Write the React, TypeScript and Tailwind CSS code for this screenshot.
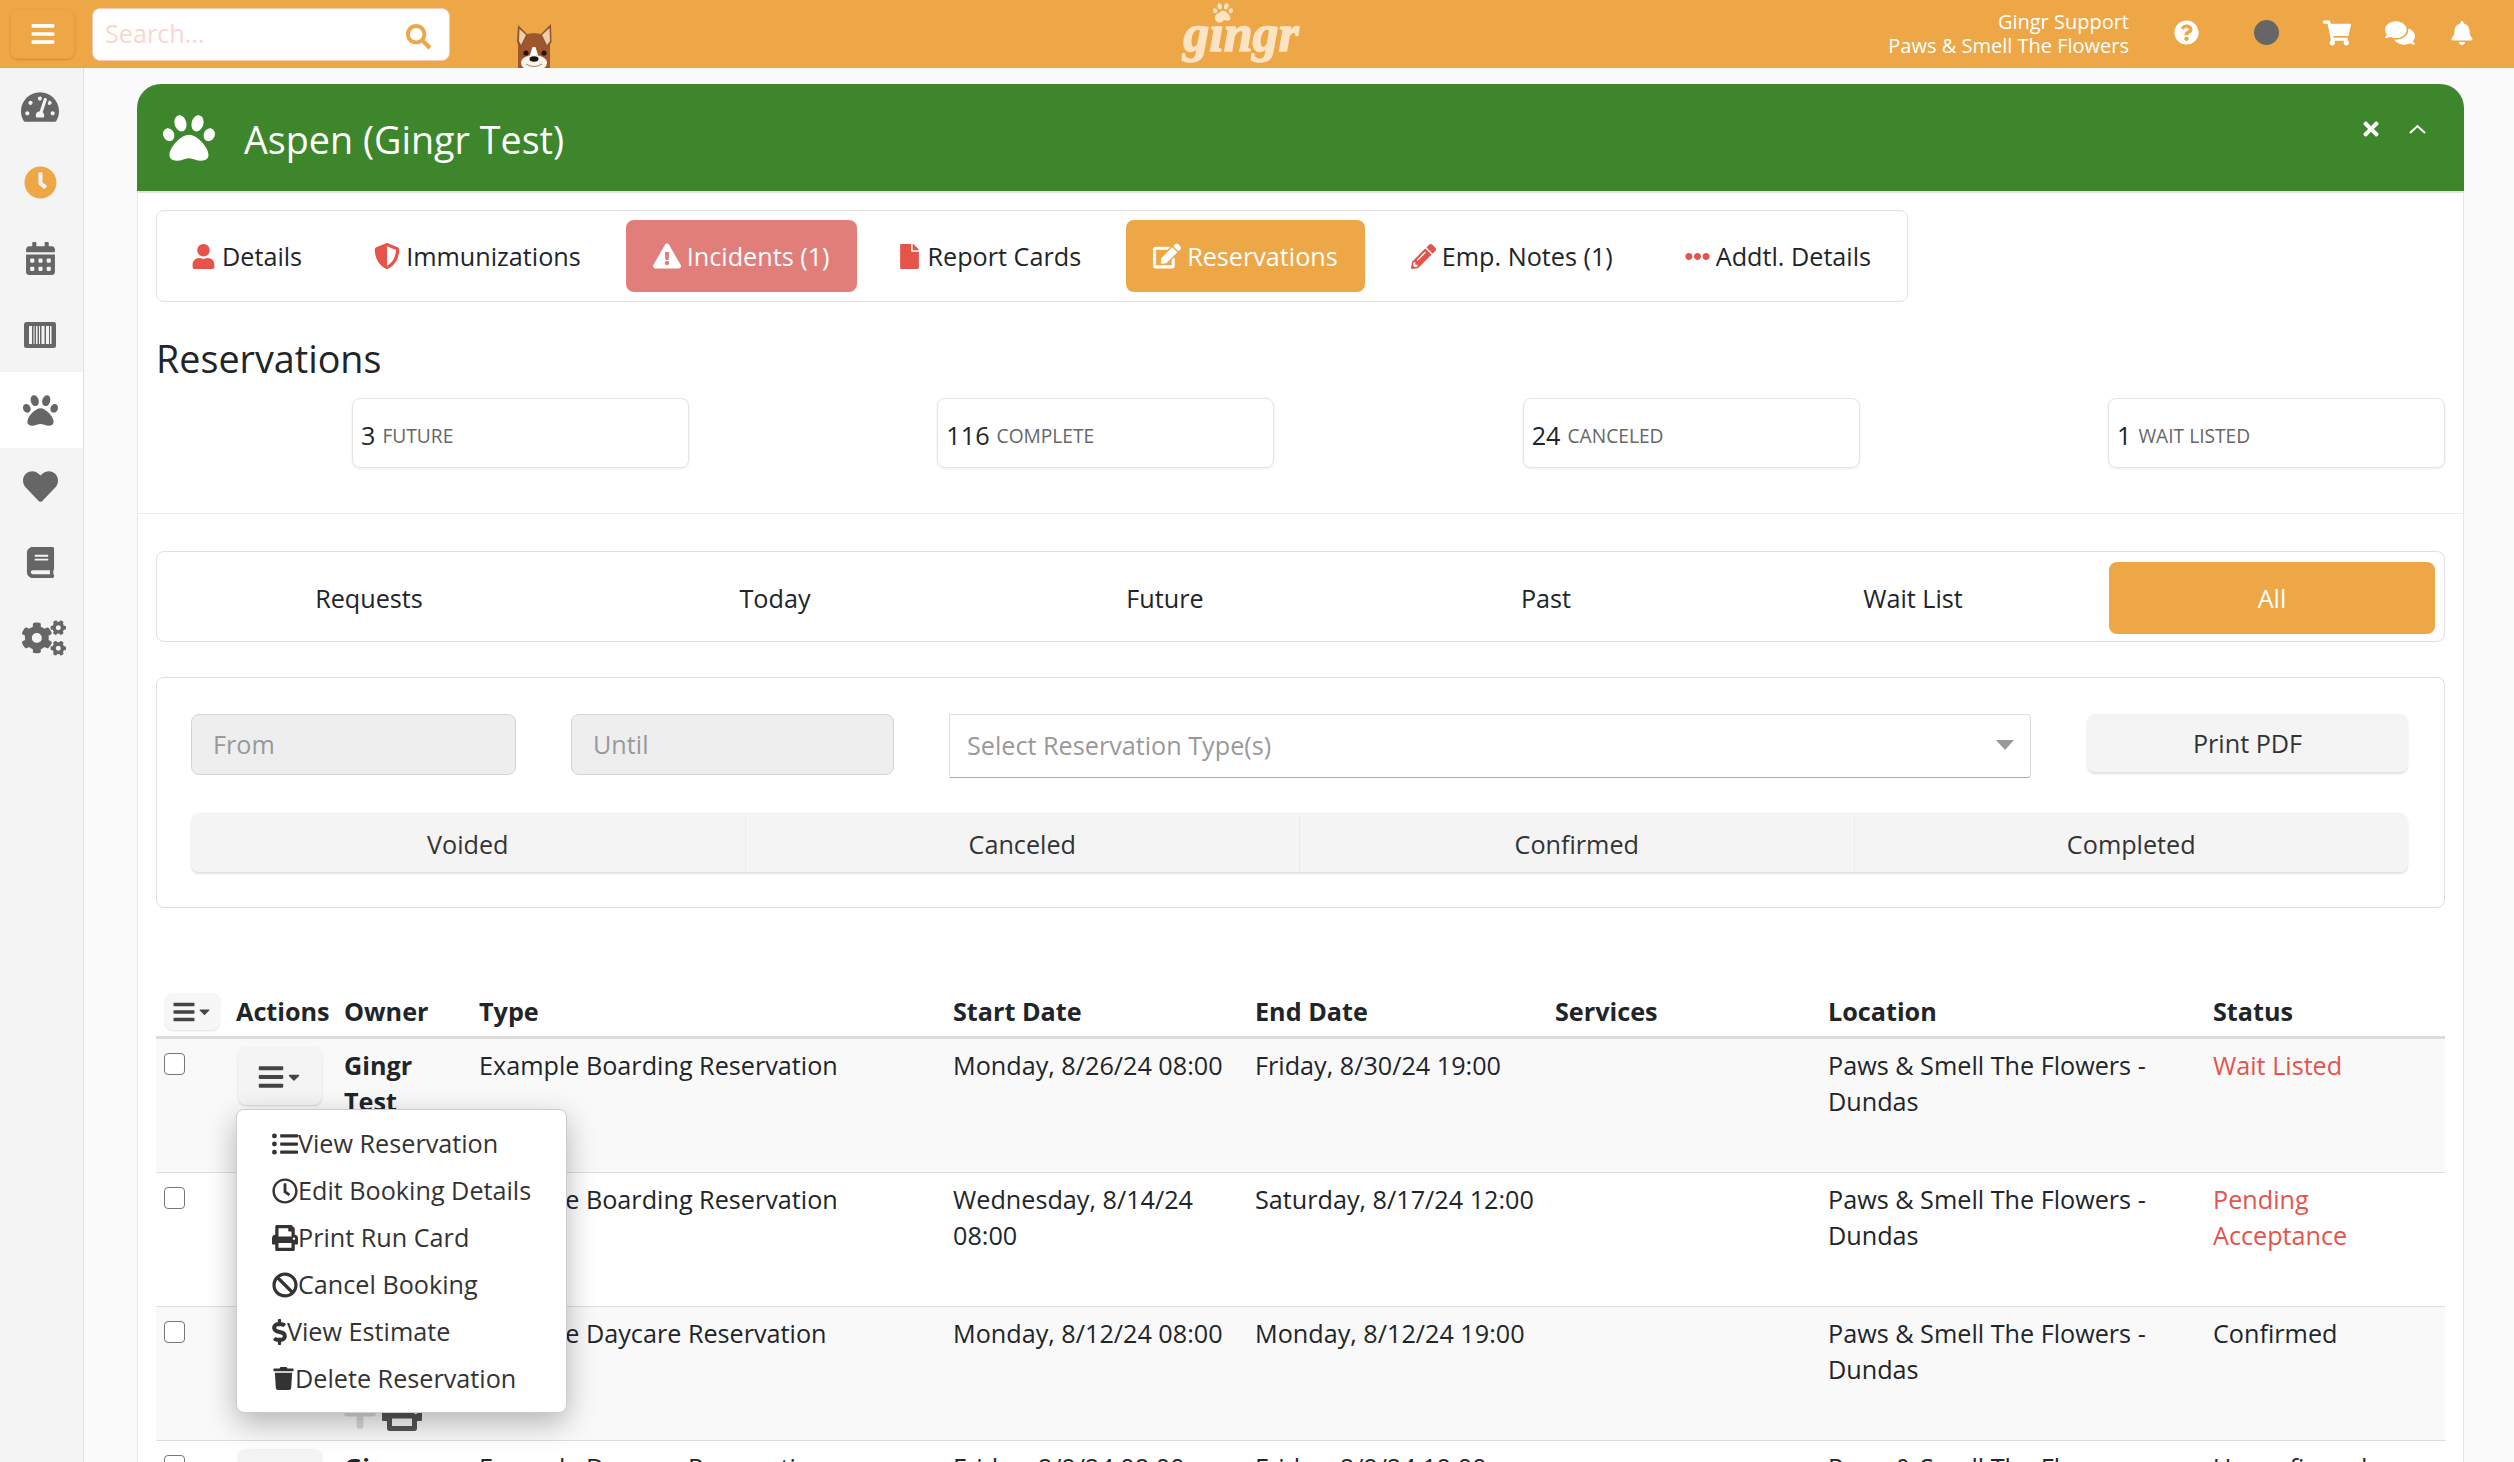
import {
  FaBars, FaSearch, FaQuestionCircle, FaShoppingCart, FaComments, FaBell, FaTachometerAlt, FaClock, FaCalendarAlt,
  FaPaw, FaHeart, FaBook, FaCogs, FaUser, FaShieldAlt, FaExclamationTriangle, FaFile, FaEdit, FaPencilAlt, FaEllipsisH,
  FaTimes, FaCaretDown, FaListUl, FaRegClock, FaPrint, FaBan, FaDollarSign, FaTrash, FaPlus,
} from "react-icons/fa"

function BarcodeIcon() {
  return (
    <svg width="32" height="26" viewBox="0 0 32 26">
      <rect width="32" height="26" rx="2.5" fill="#666" />
      <path d="M5 4h3v18H5zM9.5 4h1v18h-1zM12 4h1.5v18H12zM15 4h1v18h-1zM17.5 4h3v18h-3zM22 4h3v18h-3zM26 4h1.5v18H26z" fill="#f4f4f4" />
    </svg>
  )
}

function DogIcon() {
  return (
    <svg width="38" height="46" viewBox="0 0 38 46" className="block">
      <path d="M8 14 Q19 8 30 14 L35 22 V46 H3 V22 Z" fill="#a0562c" />
      <path d="M3 3 L13 13 L6 27 L2 20 Z" fill="#8f5531" />
      <path d="M4.5 7 L11 13 L6 23 L4 19 Z" fill="#f0cfa8" />
      <path d="M36 2 L25 13 L32 27 L36.5 20 Z" fill="#8f5531" />
      <path d="M34.5 6 L27 13 L32 23 L35 19 Z" fill="#f0cfa8" />
      <path d="M17.5 25 L20.5 25 L24 36 L14 36 Z" fill="#fff" />
      <ellipse cx="19" cy="41" rx="13" ry="8" fill="#fbf4ea" />
      <circle cx="11" cy="31" r="2.6" fill="#1d1512" />
      <circle cx="29" cy="31" r="2.6" fill="#1d1512" />
      <ellipse cx="19" cy="37" rx="4.5" ry="2.8" fill="#1d1512" />
      <path d="M11 42 Q19 47 27 42" fill="none" stroke="#9a8a7a" strokeWidth="1" />
    </svg>
  )
}

function SelectCaret() {
  return (
    <svg width="18" height="10" viewBox="0 0 18 10">
      <path d="M0 0 H18 L9 10 Z" fill="#999" />
    </svg>
  )
}

const sideItems = [
  { icon: <FaTachometerAlt size={38} className="text-[#666]" /> },
  { icon: <FaClock size={33} className="text-[#eda747]" /> },
  { icon: <FaCalendarAlt size={33} className="text-[#666]" /> },
  { icon: <BarcodeIcon /> },
  { icon: <FaPaw size={35} className="text-[#666]" />, active: true },
  { icon: <FaHeart size={35} className="text-[#666]" /> },
  { icon: <FaBook size={31} className="text-[#666]" /> },
  { icon: <FaCogs size={44} className="ml-[7px] text-[#666]" /> },
]

const tabs = [
  { label: "Details", icon: <FaUser size={25} /> },
  { label: "Immunizations", icon: <FaShieldAlt size={26} /> },
  { label: "Incidents (1)", icon: <FaExclamationTriangle size={28} />, bg: "bg-[#e27e7a] text-white" },
  { label: "Report Cards", icon: <FaFile size={25} />, extra: "-ml-[5px]" },
  { label: "Reservations", icon: <FaEdit size={28} />, bg: "bg-[#eda747] text-white", extra: "mr-[1px]" },
  { label: "Emp. Notes (1)", icon: <FaPencilAlt size={25} /> },
  { label: "Addtl. Details", icon: <FaEllipsisH size={25} /> },
]

const stats = [
  { n: "3", label: "FUTURE" },
  { n: "116", label: "COMPLETE" },
  { n: "24", label: "CANCELED" },
  { n: "1", label: "WAIT LISTED" },
]

const rows = [
  { type: "Example Boarding Reservation", start: "Monday, 8/26/24 08:00", end: "Friday, 8/30/24 19:00", status: "Wait Listed", statusCls: "text-[#e5534b]" },
  { type: "Example Boarding Reservation", start: "Wednesday, 8/14/24 08:00", end: "Saturday, 8/17/24 12:00", status: "Pending Acceptance", statusCls: "text-[#e5534b]" },
  { type: "Example Daycare Reservation", start: "Monday, 8/12/24 08:00", end: "Monday, 8/12/24 19:00", status: "Confirmed", statusCls: "", extra: true },
  { type: "Example Daycare Reservation", start: "Friday, 8/9/24 08:00", end: "Friday, 8/9/24 19:00", status: "Unconfirmed", statusCls: "" },
]

const menu = [
  { label: "View Reservation", icon: <FaListUl size={26} /> },
  { label: "Edit Booking Details", icon: <FaRegClock size={26} /> },
  { label: "Print Run Card", icon: <FaPrint size={26} /> },
  { label: "Cancel Booking", icon: <FaBan size={26} /> },
  { label: "View Estimate", icon: <FaDollarSign size={26} className="w-[15px]" /> },
  { label: "Delete Reservation", icon: <FaTrash size={23} /> },
]

function RowMenu() {
  return (
    <div className="absolute left-0 top-[62px] z-10 w-[331px] rounded-lg border border-[#ccc] bg-white py-[10px] pl-[35px] leading-[37px] text-[#333] shadow-[0_10px_30px_rgba(0,0,0,0.28)]">
      {menu.map(m => (
        <div key={m.label} className="flex h-[47px] items-center whitespace-nowrap">
          {m.icon}
          <span>{m.label}</span>
        </div>
      ))}
    </div>
  )
}

export default function App() {
  return (
    <div className="flex h-[1462px] flex-col overflow-hidden bg-[#fafafa] font-['Open_Sans',sans-serif] text-[25.2px] leading-[37px] text-[#212529]">
      <header className="flex h-[68px] shrink-0 items-center bg-[#eda747]">
        <button className="ml-[10px] flex h-[50px] w-[65px] items-center justify-center rounded-lg border border-[#e8a040] text-white shadow-[0_1px_2px_rgba(0,0,0,0.15)]">
          <FaBars size={26} />
        </button>
        <div className="relative ml-[17px] h-[53px] w-[358px] rounded-lg border border-[#f6c9b0] bg-white">
          <input placeholder="Search..." className="h-full w-full rounded-lg bg-transparent pb-[3px] pl-[12px] text-[25.2px] outline-none placeholder:text-[#fbd5d0]" />
          <FaSearch size={25} className="absolute right-[18px] top-[15px] text-[#eda747]" />
        </div>
        <div className="ml-[65px] self-end">
          <DogIcon />
        </div>
        <div className="relative ml-[628px] w-[120px] text-center font-['Liberation_Serif',serif] text-[52px] font-bold italic leading-[52px] text-[#fbe3c4] [-webkit-text-stroke:1.5px_#fbe3c4]">
          gingr
          <FaPaw size={20} className="absolute left-[32px] top-[-6px]" />
        </div>
        <div className="ml-auto flex items-center">
          <div className="text-right text-[20px] leading-[24px] text-white">
            <div>Gingr Support</div>
            <div>Paws &amp; Smell The Flowers</div>
          </div>
          <FaQuestionCircle size={25} className="mb-[3px] ml-[45px] text-white" />
          <div className="mb-[3px] ml-[55px] h-[25px] w-[25px] rounded-full bg-[#666]" />
          <FaShoppingCart size={28} className="mb-[3px] ml-[44px] text-white" />
          <FaComments size={30} className="mb-[3px] ml-[34px] text-white" />
          <FaBell size={24} className="mb-[3px] ml-[35px] mr-[40px] text-white" />
        </div>
      </header>

      <div className="flex min-h-0 flex-1">
        <aside className="w-[84px] shrink-0 border-r border-[#e0e0e0] bg-[#f4f4f4]">
          {sideItems.map((item, i) => (
            <div key={i} className={`flex h-[76px] items-center justify-center pr-[3px] ${i === 0 || i === 3 ? "pt-[2px]" : ""} ${item.active ? "bg-white" : ""}`}>
              {item.icon}
            </div>
          ))}
        </aside>

        <main className="min-w-0 flex-1 pl-[53px] pr-[50px] pt-4">
          <div className="w-[2327px] rounded-t-[24px] border-x border-[#e6e6e6] bg-white">
            <div className="-mx-px flex h-[109px] items-center rounded-t-[24px] border-b-2 border-[#dfe6dc] bg-[#3e862b] text-white">
              <FaPaw size={52} className="ml-[26px]" />
              <h1 className="ml-[29px] pt-[4px] text-[37.7px] leading-[50px]">Aspen (Gingr Test)</h1>
              <div className="ml-auto mb-[18px] mr-[37px] flex items-center gap-[26px]">
                <FaTimes size={22} />
                <svg width="19" height="12" viewBox="0 0 19 12" fill="none" stroke="white" strokeWidth="2">
                  <path d="M2 10 L9.5 3 L17 10" />
                </svg>
              </div>
            </div>

            <div className="px-[18px]">
              <div className="mt-[17px] flex h-[92px] w-[1752px] items-center gap-[18px] rounded-lg border border-[#e0e0e0] pl-[7px]">
                {tabs.map(t => (
                  <div
                    key={t.label}
                    className={`flex h-[72px] items-center gap-[6px] whitespace-nowrap rounded-lg px-[27px] ${t.bg ?? ""} ${t.extra ?? ""}`}
                  >
                    <span className={t.bg ? "" : "text-[#e5534b]"}>{t.icon}</span>
                    <span>{t.label}</span>
                  </div>
                ))}
              </div>

              <h2 className="mb-[14px] mt-[32px] text-[37.7px] leading-[50px]">Reservations</h2>

              <div className="ml-[196px] flex justify-between">
                {stats.map(s => (
                  <div key={s.label} className="flex h-[70px] w-[337px] items-center gap-[7px] rounded-lg border border-[#e4e4e4] pl-[8px] pt-[4px] shadow-[0_1px_3px_rgba(0,0,0,0.08)]">
                    <span>{s.n}</span>
                    <span className="text-[19.2px] text-[#666]">{s.label}</span>
                  </div>
                ))}
              </div>

              <div className="-mx-[18px] mt-[45px] border-t border-[#ececec]" />

              <div className="mt-[37px] flex h-[91px] items-center rounded-lg border border-[#e0e0e0] pl-[10px] pt-[2px] text-center">
                <div className="w-[404px] pt-[2px]">Requests</div>
                <div className="w-[408px] pt-[2px]">Today</div>
                <div className="w-[372px] pt-[2px]">Future</div>
                <div className="w-[390px] pt-[2px]">Past</div>
                <div className="w-[344px] pt-[2px]">Wait List</div>
                <div className="ml-[24px] flex h-[72px] w-[326px] items-center justify-center rounded-lg bg-[#eda747] pt-[2px] text-white">All</div>
              </div>

              <div className="mt-[35px] h-[231px] rounded-lg border border-[#e0e0e0] px-[34px] pt-[36px]">
                <div className="flex items-start">
                  <div className="flex h-[61px] w-[325px] items-center rounded-lg border border-[#d4d4d4] bg-[#eee] pl-[21px] text-[#999]">From</div>
                  <div className="ml-[55px] flex h-[61px] w-[323px] items-center rounded-lg border border-[#d4d4d4] bg-[#eee] pl-[21px] text-[#999]">Until</div>
                  <div className="ml-[55px] flex h-[64px] w-[1082px] items-center justify-between rounded-r border border-[#ddd] border-b-[#aaa] pb-[2px] pl-[17px] pr-[16px] text-[#999]">
                    <span>Select Reservation Type(s)</span>
                    <SelectCaret />
                  </div>
                  <button className="ml-[56px] h-[58px] w-[321px] rounded-lg bg-[#f4f4f4] text-center text-[#333] shadow-[0_2px_2px_rgba(0,0,0,0.12)]">Print PDF</button>
                </div>
                <div className="mt-[35px] flex h-[59px] w-[2217px] rounded-lg bg-[#f4f4f4] pt-[3px] text-[#333] shadow-[0_2px_2px_rgba(0,0,0,0.12)]">
                  {["Voided", "Canceled", "Confirmed", "Completed"].map((b, i) => (
                    <div key={b} className={`flex flex-1 items-center justify-center ${i > 0 ? "border-l border-[#ececec]" : ""}`}>{b}</div>
                  ))}
                </div>
              </div>

              <table className="mt-[78px] w-[2289px] table-fixed border-separate border-spacing-0 text-left leading-[36px]">
                <colgroup>
                  <col className="w-[80px]" />
                  <col className="w-[108px]" />
                  <col className="w-[135px]" />
                  <col className="w-[474px]" />
                  <col className="w-[302px]" />
                  <col className="w-[300px]" />
                  <col className="w-[273px]" />
                  <col className="w-[385px]" />
                  <col className="w-[232px]" />
                </colgroup>
                <thead>
                  <tr className="h-[53px] align-bottom font-bold">
                    <th className="border-b-[3px] border-[#ddd] pb-[6px] pl-[9px]">
                      <div className="flex h-[37px] w-[55px] items-center justify-center rounded-lg bg-[#f7f7f7] text-[#444] shadow-[0_1px_2px_rgba(0,0,0,0.12)]">
                        <FaBars size={24} />
                        <FaCaretDown size={17} />
                      </div>
                    </th>
                    {["Actions", "Owner", "Type", "Start Date", "End Date", "Services", "Location", "Status"].map(h => (
                      <th key={h} className="border-b-[3px] border-[#ddd] pb-[7px]">{h}</th>
                    ))}
                  </tr>
                </thead>
                <tbody>
                  {rows.map((r, i) => (
                    <tr key={i} className={`h-[134px] align-top ${i % 2 === 0 ? "bg-[#f9f9f9]" : "bg-white"}`}>
                      <td className="border-b border-[#ddd] pl-[8px] pt-[14px]">
                        <input type="checkbox" className="block h-[22px] w-[21px] appearance-none rounded-[4px] border border-[#777] bg-white" />
                      </td>
                      <td className="border-b border-[#ddd] pt-[8px]">
                        <div className="relative">
                          <div className="ml-[2px] flex h-[58px] w-[84px] items-center justify-center rounded-lg bg-[#f4f4f4] pt-[2px] text-[#444] shadow-[0_1px_2px_rgba(0,0,0,0.15)]">
                            <FaBars size={28} />
                            <FaCaretDown size={18} />
                          </div>
                          {i === 0 && <RowMenu />}
                        </div>
                      </td>
                      <td className="border-b border-[#ddd] pt-[8px] font-bold">
                        Gingr<br />Test
                        {r.extra && (
                          <div className="mt-[4px] flex items-end gap-[4px]">
                            <FaPlus size={36} className="-ml-[2px] text-[#d8d8d8]" />
                            <FaPrint size={40} className="text-[#555]" />
                          </div>
                        )}
                      </td>
                      <td className="border-b border-[#ddd] pr-3 pt-[8px]">{r.type}</td>
                      <td className="border-b border-[#ddd] pr-3 pt-[8px]">{r.start}</td>
                      <td className="border-b border-[#ddd] pr-3 pt-[8px]">{r.end}</td>
                      <td className="border-b border-[#ddd] pt-[8px]"></td>
                      <td className="border-b border-[#ddd] pr-3 pt-[8px]">Paws &amp; Smell The Flowers - Dundas</td>
                      <td className={`border-b border-[#ddd] pr-3 pt-[8px] ${r.statusCls}`}>{r.status}</td>
                    </tr>
                  ))}
                </tbody>
              </table>
            </div>
          </div>
        </main>
      </div>
    </div>
  )
}
